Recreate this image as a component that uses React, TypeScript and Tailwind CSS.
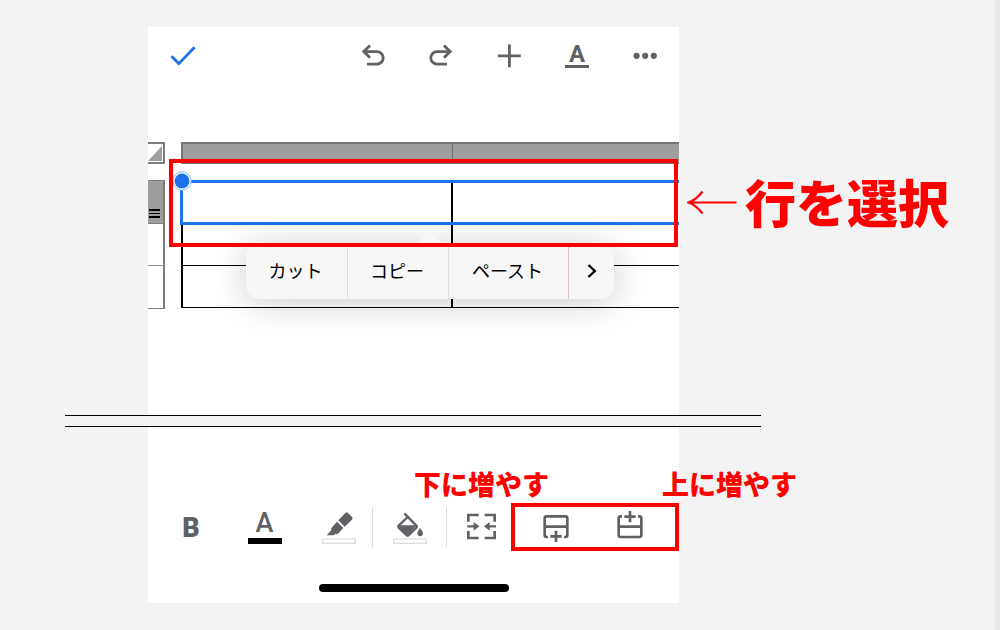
import React from 'react';

interface IconButtonProps {
  label: string;
  className?: string;
  children: React.ReactNode;
}

const IconButton: React.FC<IconButtonProps> = ({ label, className = '', children }) => (
  <button
    type="button"
    aria-label={label}
    className={`flex h-full items-center justify-center text-[#5f6165] ${className}`}
  >
    {children}
  </button>
);

const UndoIcon: React.FC<{ className?: string }> = ({ className = '' }) => (
  <svg
    viewBox="0 0 24 24"
    className={`h-6 w-6 ${className}`}
    fill="none"
    stroke="currentColor"
    strokeWidth="2.8"
  >
    <path d="M9 1.4 2.8 7.6 9 13.8" />
    <path d="M3 7.6h12.9a6.2 6.2 0 0 1 0 12.6H6" />
  </svg>
);

const TopToolbar = () => (
  <div className="flex h-[58px] items-center pl-px">
    <IconButton label="完了" className="mr-auto w-[68px]">
      <svg viewBox="0 0 26 22" className="h-[22px] w-[26px]" fill="none" stroke="#1a73e8" strokeWidth="2.8">
        <path d="M1.5 11.3 8.8 18.6 24.6 2.3" />
      </svg>
    </IconButton>
    <IconButton label="元に戻す" className="w-[68px]">
      <UndoIcon />
    </IconButton>
    <IconButton label="やり直す" className="w-[68px]">
      <UndoIcon className="-scale-x-100" />
    </IconButton>
    <IconButton label="挿入" className="w-[68px]">
      <svg viewBox="0 0 24 24" className="h-6 w-6" stroke="currentColor" strokeWidth="2.8">
        <path d="M12.4 .4v22.8M1 11.8h22.8" />
      </svg>
    </IconButton>
    <IconButton label="書式" className="w-[68px]">
      <span className="border-b-[3px] border-[#5f6165] px-1 pb-px font-['Roboto',sans-serif] text-2xl leading-5 font-bold">
        A
      </span>
    </IconButton>
    <IconButton label="その他" className="w-[68px]">
      <svg viewBox="0 0 24 24" className="h-6 w-6" fill="currentColor">
        <circle cx="3.6" cy="11.8" r="3.1" />
        <circle cx="12.2" cy="11.8" r="3.1" />
        <circle cx="20.8" cy="11.8" r="3.1" />
      </svg>
    </IconButton>
  </div>
);

const ContextMenu = () => (
  <div className="absolute top-[101px] left-[98px] grid h-14 w-[368px] grid-cols-[102fr_101fr_120fr_45fr] rounded-[14px] bg-[#f7f7f7] font-['Noto_Sans_CJK_JP',sans-serif] text-lg text-black shadow-[0_4px_36px_rgba(0,0,0,0.2)]">
    <svg viewBox="0 0 36 12" className="absolute -top-[10px] left-[166px] h-3 w-9" fill="#f7f7f7">
      <path d="M0 12C8 11 12 2 16 .6q2-1 4 0C24 2 28 11 36 12z" />
    </svg>
    <button type="button" className="border-r border-[#dcdcdc] pr-[2px] pb-[2px]">カット</button>
    <button type="button" className="border-r border-[#dcdcdc] pr-[2px] pb-[2px]">コピー</button>
    <button type="button" className="border-r border-[#dfc0c0] pr-[2px] pb-[2px]">ペースト</button>
    <button type="button" aria-label="次へ" className="flex items-center justify-center">
      <svg viewBox="0 0 10 16" className="h-4 w-[10px]" fill="none" stroke="currentColor" strokeWidth="2.4">
        <path d="m1.5 2 6.3 6-6.3 6" />
      </svg>
    </button>
  </div>
);

const TableEditor = () => (
  <div className="relative mt-[57px] flex gap-4">
    {/* Row handles */}
    <div className="w-[17px] shrink-0">
      <div className="h-[22px] border-y-2 border-r-2 border-[#7d7d7d]">
        <svg viewBox="0 0 15 18" className="h-[18px] w-[15px]" fill="#9e9e9e">
          <path d="M14 2v15H0z" />
        </svg>
      </div>
      <div className="mt-4 h-[129px] border-y border-r-2 border-[#7d7d7d]">
        <div className="flex h-[43px] flex-col justify-end gap-[2px] border-b border-[#7d7d7d] bg-[#9e9e9e] pr-[3px] pl-px pb-[5px]">
          <span className="h-[2px] bg-black" />
          <span className="h-px bg-black" />
          <span className="h-[2px] bg-black" />
        </div>
        <div className="h-[42px] border-b border-[#8a8a8a]" />
      </div>
    </div>

    {/* Column handles and cells */}
    <div className="flex-1">
      <div className="grid h-[22px] grid-cols-[271fr_227fr] border-y-2 border-l-2 border-[#757575] bg-[#9e9e9e]">
        <div className="border-r border-[#6b6b6b]" />
        <div />
      </div>
      <table aria-label="表" className="mt-[17px] w-full table-fixed border-collapse">
        <colgroup>
          <col className="w-[54.4%]" />
          <col />
        </colgroup>
        <tbody>
          {[1, 2, 3].map((row) => (
            <tr key={row} className="h-[42px]">
              <td className="border-y border-l-2 border-black" />
              <td className="border-y border-l-2 border-black" />
            </tr>
          ))}
        </tbody>
      </table>
    </div>

    {/* Selected row */}
    <div className="absolute top-[38px] right-0 left-8 h-[45px] border-y-[3px] border-l-[3px] border-[#1a73e8]" />
    <svg viewBox="0 0 20 20" className="absolute top-[29px] left-6 h-5 w-5">
      <circle cx="10" cy="10" r="9.2" fill="#fff" stroke="#8ab8f5" strokeWidth="1" />
      <circle cx="10" cy="10" r="7.4" fill="#1a73e8" />
    </svg>

    <ContextMenu />
    <div className="absolute top-[17px] right-px left-[21px] h-[88px] border-4 border-[#ff0000]" />
  </div>
);

const BottomToolbar = () => (
  <div className="relative mt-[76px] grid h-12 grid-cols-[79fr_75fr_70fr_1px_73fr_1px_64fr_168fr] items-center">
    <IconButton label="太字" className="pt-[2px] pl-[7px]">
      <span className="font-['Roboto',sans-serif] text-[27px] leading-6 font-black">B</span>
    </IconButton>
    <IconButton label="文字の色">
      <span className="flex w-[34px] flex-col items-center border-b-[6px] border-black pb-px font-['Roboto',sans-serif] text-[27px] leading-[27px] font-medium">
        A
      </span>
    </IconButton>
    <IconButton label="ハイライト" className="pl-1">
      <svg viewBox="486 60 102 102" className="h-[34px] w-[34px]" fill="currentColor">
        <path d="M556 69q4-4 8 0l12 12q4 4 0 8l-22 21-19-19z" />
        <path d="m531 95 19 19-14 15q-4 4-9 2l-6 5h-21l14-15q-2-5 2-9z" />
        <rect x="488" y="147" width="98" height="13" fill="#fff" stroke="#dedede" strokeWidth="4" />
      </svg>
    </IconButton>
    <div className="h-10 bg-[#dcdcdc]" />
    <IconButton label="塗りつぶし">
      <svg viewBox="100 60 102 102" className="h-[34px] w-[34px]" fill="currentColor">
        <path
          d="m134 70 36 37q3 3 0 6l-22 22q-4 4-8 0l-23-22q-3-3 0-6l27-26"
          fill="none"
          stroke="currentColor"
          strokeWidth="7"
        />
        <path d="M115 106h56l-25 28q-3 3-7 0z" />
        <path d="M181 114q9 11 9 16a8.5 8.5 0 0 1-17 0q0-5 8-16z" />
        <rect x="102" y="147" width="98" height="13" fill="#fff" stroke="#dedede" strokeWidth="4" />
      </svg>
    </IconButton>
    <div className="h-10 bg-[#dcdcdc]" />
    <IconButton label="セルを結合" className="pl-1">
      <svg viewBox="319 151 90 102" className="h-[34px] w-[30px]" fill="none" stroke="currentColor" strokeWidth="8">
        <path d="M326 186v-20h31M375 166h30v20M326 214v21h31M375 235h30v-21" />
        <path d="M323 200h25M409 200h-25" strokeWidth="7" />
        <path d="m342 187 17 13-17 13zM390 187l-17 13 17 13z" fill="currentColor" stroke="none" />
      </svg>
    </IconButton>
    <div className="grid h-full grid-cols-2 border-4 border-[#ff0000] pr-2 pl-1">
      <IconButton label="下に行を追加">
        <svg viewBox="129 150 78 102" className="h-[34px] w-[26px]" fill="none" stroke="currentColor" strokeWidth="8">
          <path d="M144 231h-4q-6 0-6-6v-50q0-6 6-6h56q6 0 6 6v50q0 6-6 6h-4M134 200h68" />
          <path d="M168 212v34M151 229h34" />
        </svg>
      </IconButton>
      <IconButton label="上に行を追加">
        <svg viewBox="351 150 78 102" className="h-[34px] w-[26px]" fill="none" stroke="currentColor" strokeWidth="8">
          <path d="M366 169h-4q-6 0-6 6v50q0 6 6 6h56q6 0 6-6v-50q0-6-6-6h-4M356 200h68" />
          <path d="M390 153v34M373 170h34" />
        </svg>
      </IconButton>
    </div>

    {/* Captions above the row buttons */}
    <p className="absolute -top-8 right-[130px] text-[27px] leading-[26px] font-black whitespace-nowrap text-[#ff0000]">
      下に増やす
    </p>
    <p className="absolute -top-8 -right-[118px] text-[27px] leading-[26px] font-black whitespace-nowrap text-[#ff0000]">
      上に増やす
    </p>
  </div>
);

export default function App() {
  return (
    <div className="grid min-h-screen grid-cols-[148fr_531fr_316fr] items-start border-r-[5px] border-[#e8eae9] bg-[#f3f3f3] pt-[27px] pb-[27px] font-['Noto_Sans_CJK_JP',sans-serif]">
      <main className="col-start-2 bg-white pb-[11px]">
        <TopToolbar />
        <TableEditor />
        {/* Section break */}
        <div className="relative mt-[106px] -mr-[82px] -ml-[83px] h-3 border-y border-black bg-[#f3f3f3]" />
        <BottomToolbar />
        <div className="mx-auto mt-[33px] h-[8px] w-[190px] rounded-full bg-black" />
      </main>

      <div className="mt-[144px] flex items-center gap-2 pl-2 text-[#ff0000]">
        <svg viewBox="0 0 50 24" className="h-6 w-[50px] shrink-0" fill="none" stroke="currentColor" strokeWidth="2.2">
          <path d="M1.5 12.5h48M15.5 1.5Q9 10 1.5 12.5 9 15 15.5 23.5" />
        </svg>
        <p className="pb-[2px] text-[51px] leading-[60px] font-black whitespace-nowrap">行を選択</p>
      </div>
    </div>
  );
}
